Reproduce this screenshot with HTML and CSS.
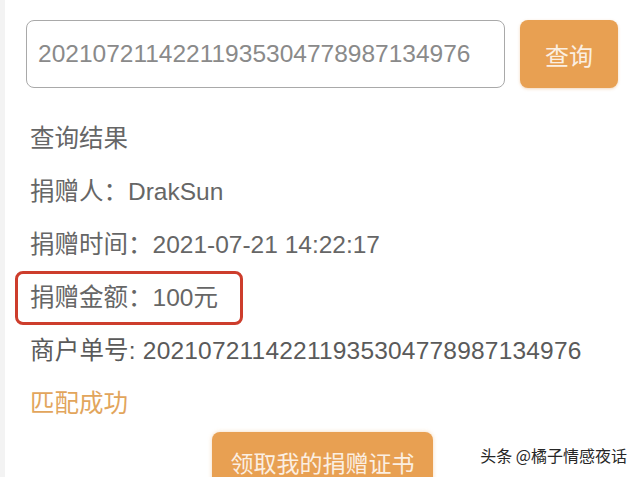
FILE: index.html
```html
<!DOCTYPE html>
<html lang="zh-CN">
<head>
    <meta charset="UTF-8">
    <meta name="viewport" content="width=device-width, initial-scale=1.0">
    <title>捐赠查询</title>
    <link rel="stylesheet" href="styles.css">
</head>
<body>
    <div class="page">
      <!-- Search bar -->
      <div class="search">
          <div class="search-input">20210721142211935304778987134976</div>
          <button class="search-btn">查询</button>
      </div>

      <div class="result">
          <div class="row">查询结果</div>
          <div class="row">捐赠人：DrakSun</div>
          <div class="row">捐赠时间：2021-07-21 14:22:17</div>
          <div class="row"><span class="highlight">捐赠金额：100元</span></div>
          <div class="row order">商户单号: 20210721142211935304778987134976</div>
          <div class="row success">匹配成功</div>
      </div>

      <div class="actions">
          <button class="cert-btn">领取我的捐赠证书</button>
      </div>
    </div>

    <div class="watermark">头条 @橘子情感夜话</div>
</body>
</html>
```

FILE: styles.css
```css
/* General Styles */
body {
    margin: 0;
    background: #ffffff;
    font-family: "Liberation Sans", "Noto Sans CJK SC", sans-serif;
    color: #666666;
    overflow: hidden;
    height: 477px;
    position: relative;
}

.page {
    border-left: 5px solid #f3f3f3;
    height: 100%;
    box-sizing: border-box;
}

/* Search bar */
.search {
    display: flex;
    align-items: center;
    padding: 20px 0 0 21px;
}

.search-input {
    width: 479px;
    height: 68px;
    box-sizing: border-box;
    border: 1.5px solid #a9a9a9;
    border-radius: 8px;
    padding-left: 11px;
    font-size: 24.5px;
    line-height: 65px;
    color: #8a8a8a;
}

.search-btn {
    margin-left: 15px;
    width: 98px;
    height: 68px;
    border: none;
    border-radius: 8px;
    background: #e8a052;
    color: #fbefe2;
    font-family: inherit;
    font-size: 24px;
    box-shadow: 0 1px 3px rgba(220, 140, 60, 0.35);
}

/* Result rows */
.result {
    padding: 24px 0 0 25px;
    font-size: 24.5px;
}

.row {
    height: 53px;
    line-height: 53px;
}

.highlight {
    display: inline-block;
    margin-left: -15px;
    width: 228px;
    height: 54px;
    box-sizing: border-box;
    border: 3px solid #cd3d2c;
    border-radius: 8px;
    padding-left: 12px;
    line-height: 48px;
    margin-top: -1px;
}

.order {
    color: #5a5a5a;
    letter-spacing: 0.2px;
}

.success {
    color: #e2a55c;
}

/* Certificate button */
.actions {
    display: flex;
    justify-content: center;
    padding-top: 2px;
}

.cert-btn {
    width: 221px;
    height: 68px;
    border: none;
    border-radius: 8px;
    background: #e8a052;
    color: #fbefe2;
    font-family: inherit;
    font-size: 23px;
    padding-bottom: 10px;
    box-shadow: 0 0 4px rgba(232, 160, 82, 0.4);
}

.watermark {
    position: absolute;
    right: 13px;
    bottom: 10px;
    font-family: "Noto Sans CJK SC", sans-serif;
    font-size: 16px;
    color: #262626;
    text-shadow: 0 0 2px #ffffff, 0 0 2px #ffffff;
}
```
